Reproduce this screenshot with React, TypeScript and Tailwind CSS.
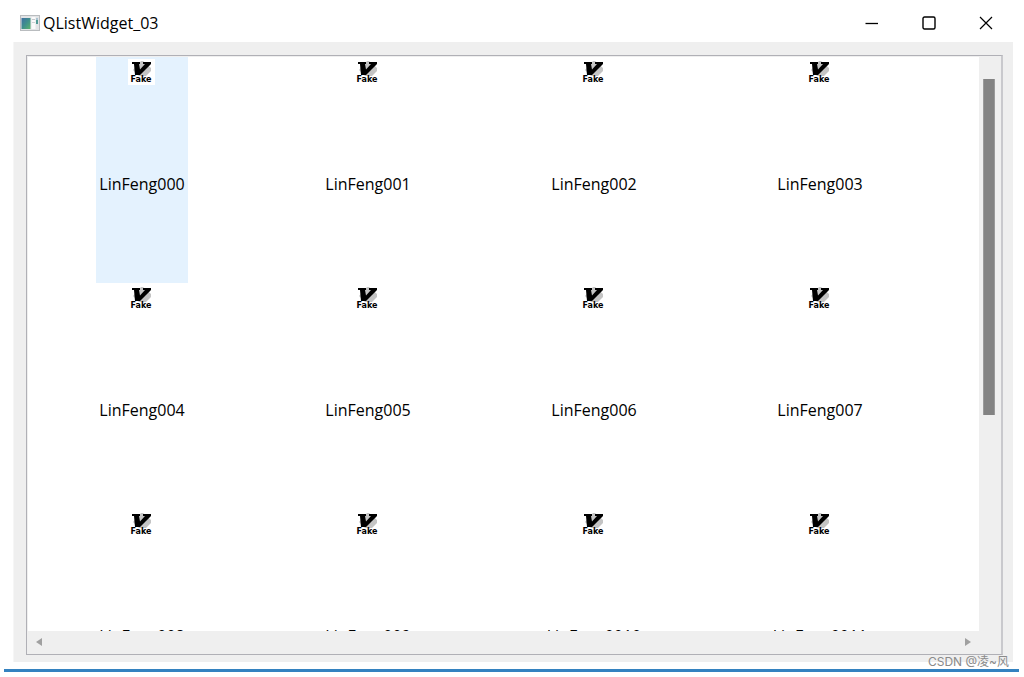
import React, { useState } from "react";

const items = [
  "LinFeng000",
  "LinFeng001",
  "LinFeng002",
  "LinFeng003",
  "LinFeng004",
  "LinFeng005",
  "LinFeng006",
  "LinFeng007",
  "LinFeng008",
  "LinFeng009",
  "LinFeng0010",
  "LinFeng0011",
];

function AppIcon() {
  return (
    <svg width="20" height="16" viewBox="0 0 20 16" aria-hidden="true">
      <defs>
        <linearGradient id="pane" x1="0" y1="0" x2="1" y2="1">
          <stop offset="0" stopColor="#3f6fa3" />
          <stop offset="0.5" stopColor="#3f8f8c" />
          <stop offset="1" stopColor="#5cb46c" />
        </linearGradient>
      </defs>
      <rect x="0.5" y="0.5" width="19" height="15" fill="#e2e4e6" stroke="#b9bcbf" />
      <rect x="1.5" y="3" width="9" height="11" fill="url(#pane)" />
      <rect x="11.5" y="2" width="4" height="12" fill="#fafafa" />
      <rect x="12" y="4" width="3" height="1" fill="#c3c6ca" />
      <rect x="12" y="7" width="3" height="1" fill="#d0d3d6" />
      <rect x="16" y="3" width="2" height="6" fill="#4f9a95" />
      <rect x="16" y="3" width="2" height="2" fill="#a9c4d2" />
    </svg>
  );
}

function FakeIcon() {
  return (
    <svg width="27" height="26" viewBox="0 0 27 26" className="shrink-0 bg-white" aria-hidden="true">
      <path d="M13 2 L15 2 L23 9 V12 L18 17 H11 L5 11 Z" fill="#c4c4c4" />
      <path d="M4 3 H12 V5 H11 L12 10.5 L17 5 H15 V3 H23 V5 L12 16 H7 L6 5 H4 Z" fill="#000" />
      <text
        x="13"
        y="23"
        textAnchor="middle"
        fontSize="8"
        fontWeight="700"
        fontFamily="DejaVu Sans, sans-serif"
        fill="#000"
      >
        Fake
      </text>
    </svg>
  );
}

export default function App() {
  const [selected, setSelected] = useState(0);
  return (
    <div className="flex h-screen flex-col bg-white pb-[5px] font-['Open_Sans','Noto_Sans_CJK_SC',sans-serif] text-black">
      <div className="ml-[13px] mr-[11px] flex min-h-0 flex-1 flex-col">
        <header className="flex h-[42px] shrink-0 items-center pl-[7px] pt-1">
          <AppIcon />
          <h1 className="ml-[3px] text-[16px] leading-5">QListWidget_03</h1>
          <div className="ml-auto flex">
            <button aria-label="Minimize" className="flex h-8 w-[57px] items-center justify-center">
              <svg width="14" height="14" viewBox="0 0 14 14">
                <path d="M0.5 7.5H13" stroke="#000" strokeWidth="1.3" />
              </svg>
            </button>
            <button aria-label="Maximize" className="flex h-8 w-[58px] items-center justify-center">
              <svg width="14" height="14" viewBox="0 0 14 14">
                <rect x="1" y="1" width="12" height="12" rx="1.5" fill="none" stroke="#000" strokeWidth="1.4" />
              </svg>
            </button>
            <button aria-label="Close" className="flex h-8 w-[55px] items-center justify-center">
              <svg width="14" height="14" viewBox="0 0 14 14">
                <path d="M1 1L13 13M13 1L1 13" stroke="#000" strokeWidth="1.2" />
              </svg>
            </button>
          </div>
        </header>
        <main className="flex min-h-0 flex-1 flex-col border-l border-[#f6f6f6] bg-[#efefef] pb-[7px] pl-3 pr-[10px] pt-[13px]">
          <div className="flex min-h-0 flex-1 flex-col border border-r-2 border-[#b0b0b6] border-r-[#c9c9cd] pl-px pt-px">
            <div className="flex min-h-0 flex-1">
              <ul className="flex min-w-0 flex-1 flex-wrap content-start overflow-hidden bg-white pl-px">
                {items.map((name, i) => (
                  <li key={name} className="flex h-[226px] w-[226px] justify-center">
                    <button
                      onClick={() => setSelected(i)}
                      className={
                        "flex h-full flex-col items-center px-[3px] pt-0.5 " +
                        (selected === i ? "bg-[#e4f2fe]" : "bg-white")
                      }
                    >
                      <FakeIcon />
                      <span className="mt-[89px] text-[16px] leading-5">{name}</span>
                    </button>
                  </li>
                ))}
              </ul>
              <div className="w-[22px] shrink-0 px-1 pt-[22px]">
                <div className="h-[336px] w-3 border-x border-[#9a9a9a] bg-[#838383]" />
              </div>
            </div>
            <div className="flex h-[23px] shrink-0 items-center justify-between pb-0.5 pl-2 pr-[30px]">
              <button aria-label="Scroll left">
                <svg width="6" height="8" viewBox="0 0 6 8">
                  <path d="M6 0V8L0 4Z" fill="#a0a0a0" />
                </svg>
              </button>
              <button aria-label="Scroll right">
                <svg width="6" height="8" viewBox="0 0 6 8">
                  <path d="M0 0V8L6 4Z" fill="#a0a0a0" />
                </svg>
              </button>
            </div>
          </div>
        </main>
      </div>
      <footer className="relative ml-1 mr-[5px] mt-[7px] h-[3px] shrink-0 bg-[#3482c0]">
        <span className="absolute bottom-0.5 right-[10px] whitespace-nowrap font-['Inter','Noto_Sans_CJK_SC',sans-serif] text-[12px] leading-4 text-[#8a8a8a]">
          CSDN @凌~风
        </span>
      </footer>
    </div>
  );
}
